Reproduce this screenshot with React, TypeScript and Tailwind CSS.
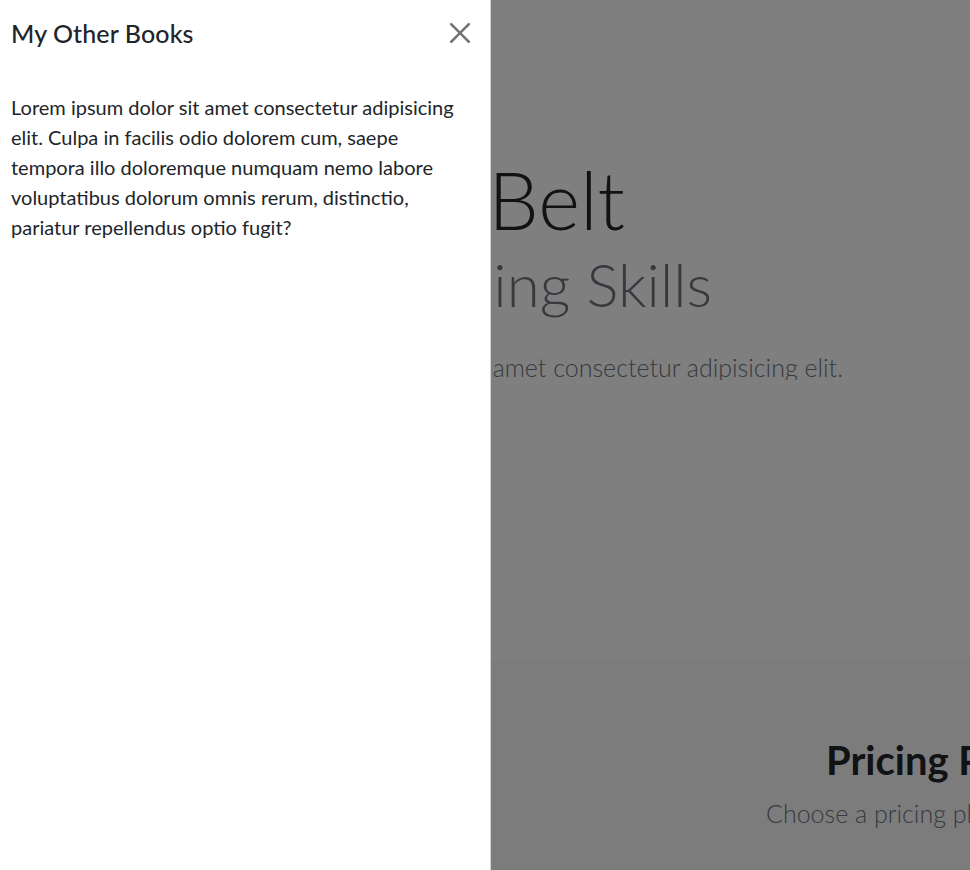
import React from "react";

const font = "font-['Lato','Liberation_Sans',sans-serif]";

function CloseIcon() {
  return (
    <svg viewBox="0 0 16 16" className="h-5 w-5" aria-hidden>
      <path
        fill="#000"
        fillOpacity={0.55}
        d="M.293.293a1 1 0 0 1 1.414 0L8 6.586 14.293.293a1 1 0 1 1 1.414 1.414L9.414 8l6.293 6.293a1 1 0 0 1-1.414 1.414L8 9.414l-6.293 6.293a1 1 0 0 1-1.414-1.414L6.586 8 .293 1.707a1 1 0 0 1 0-1.414"
      />
    </svg>
  );
}

export default function App() {
  return (
    <div className={`relative flex h-[870px] w-[970px] flex-col overflow-hidden bg-white text-[#212529] ${font}`}>
      {/* Page behind the offcanvas (only the part right of the panel is visible) */}
      <section className="h-[660px] shrink-0 pt-[159px]">
        <div className="ml-[491px] flex flex-col items-end overflow-hidden whitespace-nowrap">
          <h1 className="mr-[345px] text-[80px] font-light leading-none">Code Black Belt</h1>
          <p className="mr-[258px] mt-[15px] text-[60px] font-light leading-none text-[#6c757d]">
            Level Up Your Coding Skills
          </p>
          <p className="mr-[127px] mt-[41px] text-[25px] font-light leading-none text-[#6c757d]">
            Lorem ipsum dolor sit amet consectetur adipisicing elit.
          </p>
        </div>
      </section>

      <section className="flex flex-1 flex-col whitespace-nowrap bg-[#f8f9fa] pt-[80px]">
        <h2 className="pl-[826px] text-[40px] font-bold leading-none">Pricing Plans</h2>
        <p className="mt-[21px] pl-[766px] text-[25px] font-light leading-none text-[#6c757d]">
          Choose a pricing plan that fits your needs
        </p>
      </section>

      {/* Backdrop */}
      <div className="fixed inset-0 bg-black/50" />

      {/* Offcanvas */}
      <aside className="fixed inset-y-0 left-0 flex w-[491px] flex-col border-r border-black/[0.175] bg-white">
        <div className="flex items-center justify-between py-[18px] pl-[11px] pr-[20px]">
          <h5 className="text-[25px] font-medium leading-[30px] tracking-[0.1px]">My Other Books</h5>
          <button type="button" aria-label="Close" className="flex h-5 w-5 items-center justify-center">
            <CloseIcon />
          </button>
        </div>
        <div className="pl-[11px] pr-[30px] pt-[26px] text-[20px] leading-[30px]">
          Lorem ipsum dolor sit amet consectetur adipisicing elit. Culpa in facilis odio dolorem cum, saepe
          tempora illo doloremque numquam nemo labore voluptatibus dolorum omnis rerum, distinctio, pariatur
          repellendus optio fugit?
        </div>
      </aside>
    </div>
  );
}
